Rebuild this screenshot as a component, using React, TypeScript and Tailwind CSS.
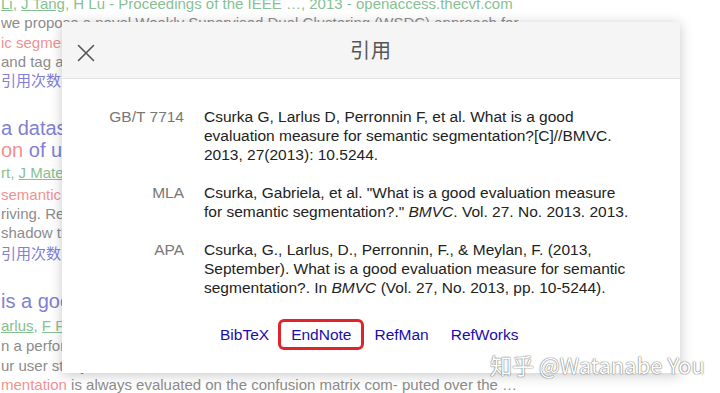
import React from "react";

const sans = "font-['Liberation_Sans','Noto_Sans_CJK_SC',Arial,sans-serif]";

type Entry = { label: string; text: React.ReactNode };

const entries: Entry[] = [
  {
    label: "GB/T 7714",
    text: "Csurka G, Larlus D, Perronnin F, et al. What is a good evaluation measure for semantic segmentation?[C]//BMVC. 2013, 27(2013): 10.5244.",
  },
  {
    label: "MLA",
    text: (
      <>
        Csurka, Gabriela, et al. "What is a good evaluation measure for semantic segmentation?." <i>BMVC</i>. Vol. 27. No. 2013. 2013.
      </>
    ),
  },
  {
    label: "APA",
    text: (
      <>
        Csurka, G., Larlus, D., Perronnin, F., &amp; Meylan, F. (2013, September). What is a good evaluation measure for semantic segmentation?. In <i>BMVC</i> (Vol. 27, No. 2013, pp. 10-5244).
      </>
    ),
  },
];

function Background() {
  const gray = "text-[#8c8c8c]";
  const green = "text-[#86c192]";
  const pink = "text-[#f09292]";
  const purple = "text-[#8080d4]";
  const line = "h-[19px] leading-[19px] whitespace-nowrap";
  const title = "h-[22px] leading-[22px] text-[20px] whitespace-nowrap";

  return (
    <div className={`-mt-[6px] pl-[1px] text-[15px] ${sans}`}>
      <div className={`${line} ${green}`}>
        <span className="underline">Li</span>, <span className="underline">J Tang</span>, H Lu - Proceedings of the IEEE …, 2013 - openaccess.thecvf.com
      </div>
      <div className={`${line} ${gray}`}>we propose a novel Weakly Supervised Dual Clustering (WSDC) approach for</div>
      <div className={`${line} ${pink} mt-[1px]`}>ic segmentation</div>
      <div className={`${line} ${gray}`}>and tag annotations</div>
      <div className={`${line} ${purple}`}>引用次数：</div>

      <div className={`${title} ${purple} mt-[27px]`}>a dataset</div>
      <div className={`${title} ${purple}`}>
        <span className="text-[#f09090]">on</span> of urban
      </div>
      <div className={`${line} ${green} mt-[2px]`}>
        rt, <span className="underline">J Mateos</span>
      </div>
      <div className={`${line} ${pink} mt-[3px]`}>semantic</div>
      <div className={`${line} ${gray}`}>riving. Results</div>
      <div className={`${line} ${gray}`}>shadow the</div>
      <div className={`${line} ${purple} mt-[2px]`}>引用次数：</div>

      <div className={`${title} ${purple} mt-[27px]`}>is a good</div>
      <div className={`${line} ${green} mt-[4px]`}>
        <span className="underline">arlus</span>, <span className="underline">F Perronnin</span>
      </div>
      <div className={`${line} ${gray} mt-[1px]`}>n a performance</div>
      <div className={`${line} ${gray} mt-[1px]`}>ur user study</div>
      <div className={`${line} ${gray}`}>
        <span className={pink}>mentation</span> is always evaluated on the confusion matrix com- puted over the …
      </div>
    </div>
  );
}

function CloseIcon() {
  return (
    <svg width="18" height="18" viewBox="0 0 18 18" fill="none" stroke="#555" strokeWidth="1.6" strokeLinecap="round">
      <path d="M1.5 1.5 L16.5 16.5 M16.5 1.5 L1.5 16.5" />
    </svg>
  );
}

export default function App() {
  return (
    <div className={`relative h-[393px] w-[720px] overflow-hidden bg-white ${sans}`}>
      <Background />

      {/* citation dialog */}
      <div className="absolute left-[62px] top-[22px] flex h-[351px] w-[618px] flex-col bg-white shadow-[0_2px_12px_rgba(0,0,0,0.22)]">
        <div className="relative flex h-[57px] shrink-0 items-center justify-center border-b border-[#e2e2e2] bg-[#f5f5f5]">
          <button type="button" className="absolute left-[15px] top-[22px]" aria-label="Close">
            <CloseIcon />
          </button>
          <h2 className="text-[20px] font-normal tracking-[1px] text-[#555] font-['Noto_Sans_CJK_SC',sans-serif]">引用</h2>
        </div>

        <div className="flex flex-col gap-[19px] pt-[28px] text-[15.5px] leading-[19px]">
          {entries.map((e) => (
            <div key={e.label} className="grid grid-cols-[122px_426px] gap-x-[20px]">
              <div className="text-right text-[#777]">{e.label}</div>
              <div className="text-[#222]">{e.text}</div>
            </div>
          ))}
        </div>

        <div className="mt-[22px] flex items-center pl-[158px] text-[15.5px] leading-[19px] text-[#1a0dab]">
          <a className="mr-[9px]">BibTeX</a>
          <a className="rounded-[6px] border-[3px] border-[#e0242a] px-[10px] py-[3px]">EndNote</a>
          <a className="ml-[10px]">RefMan</a>
          <a className="ml-[22px]">RefWorks</a>
        </div>
      </div>

      {/* watermark */}
      <div className="absolute left-[490px] top-[350px] whitespace-nowrap text-[22px] leading-[28px] text-white [text-shadow:0_0_1px_rgba(0,0,0,0.7),0_0_2px_rgba(0,0,0,0.35)] font-['Noto_Sans_CJK_SC',sans-serif]">
        知乎 @Watanabe You
      </div>
    </div>
  );
}
